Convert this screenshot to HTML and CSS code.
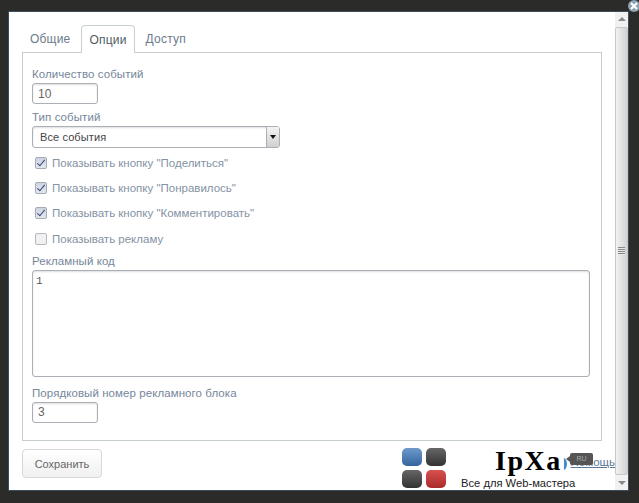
FILE: index.html
```html
<!DOCTYPE html>
<html lang="ru">
<head>
    <meta charset="UTF-8">
    <meta name="viewport" content="width=device-width, initial-scale=1.0">
    <title>Опции</title>
    <link rel="stylesheet" href="styles.css">
</head>
<body>
    <div class="dialog">
        <div class="content">
            <div class="tabs">
                <span class="tab">Общие</span>
                <span class="tab active">Опции</span>
                <span class="tab">Доступ</span>
            </div>
            <div class="panel">
                <label class="label">Количество событий</label>
                <input class="input" type="text" value="10">
                <label class="label label-type">Тип событий</label>
                <div class="select">
                    <span class="select-text">Все события</span>
                    <span class="select-arrow"></span>
                </div>
                <div class="checks">
                    <label class="check"><input type="checkbox" checked>Показывать кнопку "Поделиться"</label>
                    <label class="check"><input type="checkbox" checked>Показывать кнопку "Понравилось"</label>
                    <label class="check"><input type="checkbox" checked>Показывать кнопку "Комментировать"</label>
                    <label class="check"><input type="checkbox">Показывать рекламу</label>
                </div>
                <label class="label">Рекламный код</label>
                <textarea class="code">1</textarea>
                <label class="label label-number">Порядковый номер рекламного блока</label>
                <input class="input" type="text" value="3">
            </div>
            <div class="footer">
                <button class="button">Сохранить</button>
                <a class="help" href="#">Помощь</a>
            </div>
        </div>
        <div class="scrollbar">
            <span class="arrow arrow-up"></span>
            <div class="thumb"><span class="grip"></span></div>
            <span class="arrow arrow-down"></span>
        </div>
    </div>

    <span class="close">
        <svg width="10" height="10" viewBox="0 0 10 10"><path d="M2 2l6 6M8 2l-6 6" stroke="#fff" stroke-width="2"/></svg>
    </span>

    <!-- водяной знак поверх окна -->
    <div class="mark">
        <div class="squares">
            <span class="square blue"></span>
            <span class="square gray"></span>
            <span class="square gray"></span>
            <span class="square red"></span>
        </div>
        <div class="logo">IpXa</div>
        <span class="ear"></span>
        <span class="ru">RU</span>
        <div class="slogan">Все для Web-мастера</div>
    </div>
</body>
</html>
```

FILE: styles.css
```css
* {
    box-sizing: border-box;
}
html, body {
    height: 100%;
}
body {
    margin: 0;
    padding: 12px 11px 13px 9px;
    background: #2b2b2a;
    font-family: "Liberation Sans", Arial, sans-serif;
    overflow: hidden;
    position: relative;
}
.dialog {
    display: flex;
    height: 100%;
    background: #fff;
    box-shadow: 0 0 0 1px #3c4d5c;
}
.content {
    flex: 1;
    padding: 13px 13px 0 13px;
}
.scrollbar {
    width: 13px;
    display: flex;
    flex-direction: column;
    background: #f1f1f1;
}
.arrow {
    height: 15px;
    flex: none;
    position: relative;
}
.arrow::after {
    content: "";
    position: absolute;
    left: 3px;
    border-left: 4px solid transparent;
    border-right: 4px solid transparent;
}
.arrow-up::after {
    top: 5px;
    border-bottom: 4px solid #8a8a8a;
}
.arrow-down::after {
    top: 6px;
    border-top: 4px solid #8a8a8a;
}
.thumb {
    flex: 1;
    display: flex;
    align-items: center;
    justify-content: center;
    background: linear-gradient(to right, #f2f2f2, #d2d2d2);
    border: 1px solid #c8c8c8;
    border-radius: 2px;
}
.grip {
    width: 7px;
    height: 8px;
    background: repeating-linear-gradient(to bottom, #888 0, #888 1px, #e8e8e8 1px, #e8e8e8 2px);
}
.tabs {
    display: flex;
    height: 27px;
}
.tab {
    padding: 7px 8px 0;
    font-size: 12px;
    color: #6b7b8c;
    letter-spacing: 0.2px;
}
.tab.active {
    margin-left: 3px;
    margin-right: 3px;
    padding: 7px 7px 0;
    height: 28px;
    background: #fff;
    color: #4f5a66;
    border: 1px solid #c9d0d4;
    border-bottom: none;
    border-radius: 4px 4px 0 0;
    position: relative;
    z-index: 1;
}
.panel {
    height: 389px;
    padding: 14px 9px 0;
    border: 1px solid #c5cdd1;
}
.label {
    display: block;
    font-size: 11.5px;
    line-height: 15px;
    color: #76869a;
    letter-spacing: 0.07px;
}
.label-type {
    margin-top: 6px;
}
.label-number {
    margin-top: 9px;
}
.input {
    display: block;
    width: 66px;
    height: 21px;
    margin-top: 1px;
    padding: 0 5px;
    font: 12px "Liberation Sans", Arial, sans-serif;
    color: #666;
    background: #fff;
    border: 1px solid #aab0b5;
    border-radius: 3px;
    box-shadow: inset 0 1px 2px #ddd;
}
.select {
    display: flex;
    align-items: center;
    justify-content: space-between;
    width: 248px;
    height: 22px;
    margin-top: 1px;
    border: 1px solid #aab0b5;
    border-radius: 3px;
    box-shadow: inset 0 1px 2px #ddd;
}
.select-text {
    padding-left: 7px;
    font-size: 11px;
    color: #444;
    letter-spacing: 0.1px;
}
.select-arrow {
    width: 13px;
    height: 20px;
    background: linear-gradient(to bottom, #f4f4f4, #cfcfcf);
    border-left: 1px solid #aab0b5;
    position: relative;
}
.select-arrow::after {
    content: "";
    position: absolute;
    top: 8px;
    left: 3px;
    border-left: 3px solid transparent;
    border-right: 3px solid transparent;
    border-top: 4px solid #111;
}
.checks {
    margin: 2px 0;
}
.check {
    display: flex;
    align-items: center;
    height: 25.4px;
    padding-left: 3px;
    font-size: 11.5px;
    color: #8492a3;
}
.check input {
    appearance: none;
    display: flex;
    align-items: center;
    justify-content: center;
    width: 12px;
    height: 12px;
    margin: 0 5px 0 0;
    background: #f1f1f1;
    border: 1px solid #b4b8bd;
    border-radius: 2px;
}
.check input:checked {
    background: linear-gradient(to bottom, #cdd5e2, #e3e7ee);
    border-color: #a6acb5;
}
.check input:checked::after {
    content: "";
    width: 3px;
    height: 7px;
    margin-top: -2px;
    border-right: 1.5px solid #33467a;
    border-bottom: 1.5px solid #33467a;
    transform: rotate(40deg);
}
.code {
    display: block;
    width: 558px;
    height: 107px;
    margin-top: 1px;
    padding: 4px 3px;
    font: 11px "Liberation Mono", monospace;
    color: #555;
    border: 1px solid #aab0b5;
    border-radius: 3px;
    box-shadow: inset 0 1px 2px #ddd;
    resize: none;
}
.footer {
    display: flex;
    justify-content: space-between;
    align-items: flex-start;
    margin-right: -13px;
    padding-top: 8px;
}
.button {
    width: 80px;
    height: 29px;
    font: 11px "Liberation Sans", Arial, sans-serif;
    color: #666;
    background: linear-gradient(to bottom, #fff, #f0f0f0);
    border: 1px solid #d6d8da;
    border-radius: 4px;
}
.help {
    margin-top: 7px;
    font-size: 11.5px;
    color: #5b7897;
}
.close {
    position: absolute;
    left: 628px;
    top: 0;
    width: 12px;
    height: 12px;
    display: flex;
    align-items: center;
    justify-content: center;
    border-radius: 50%;
    background: #8ea2b2;
}
.mark {
    position: absolute;
    left: 400px;
    top: 446px;
    width: 220px;
    height: 50px;
}
.squares {
    position: absolute;
    left: 2px;
    top: 2px;
    display: grid;
    grid-template-columns: 20px 20px;
    gap: 4px;
}
.square {
    height: 18px;
    border-radius: 5px;
}
.blue {
    background: linear-gradient(to bottom, #6d9acb, #34659f);
}
.gray {
    background: linear-gradient(to bottom, #666, #333);
}
.red {
    background: linear-gradient(to bottom, #d9504f, #a92b2b);
}
.logo {
    position: absolute;
    left: 95px;
    top: -1px;
    font: bold 28px "Liberation Serif", serif;
    letter-spacing: 1.5px;
    color: #000;
}
.ear {
    position: absolute;
    left: 160px;
    top: 12px;
    width: 7px;
    height: 12px;
    border-right: 3px solid #3f8fd0;
    border-radius: 50%;
}
.ru {
    position: absolute;
    left: 170px;
    top: 7px;
    width: 23px;
    height: 12px;
    font-size: 7px;
    line-height: 12px;
    text-align: center;
    color: #aaa;
    background: #555;
    border-radius: 2px;
}
.ru::before {
    content: "";
    position: absolute;
    left: -4px;
    top: 3px;
    border-top: 3px solid transparent;
    border-bottom: 3px solid transparent;
    border-right: 4px solid #555;
}
.slogan {
    position: absolute;
    left: 61px;
    top: 31px;
    font-size: 11.2px;
    color: #222;
}
```
